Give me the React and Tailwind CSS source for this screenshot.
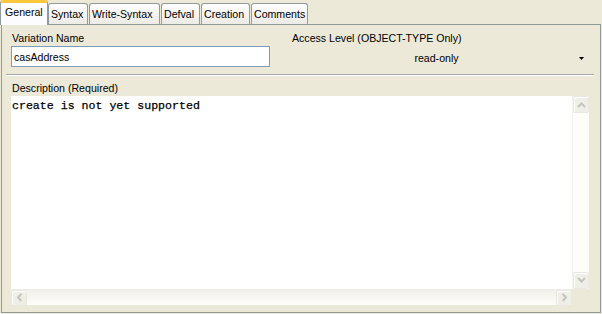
export default function App() {
  const tabs = [
    { t: "Syntax", cls: "w-[40px]" },
    { t: "Write-Syntax", cls: "w-[71px] ml-[1px]" },
    { t: "Defval", cls: "w-[39px] ml-[1px]" },
    { t: "Creation", cls: "w-[49px] ml-[1px]" },
    { t: "Comments", cls: "w-[57px] ml-[1px]" },
  ];
  const Chev = ({ d }) => (
    <svg width="9" height="7" viewBox="0 0 9 7" className="block">
      <path d={d} fill="none" stroke="#C6C5BD" strokeWidth="2" />
    </svg>
  );
  const ChevV = ({ d }) => (
    <svg width="7" height="9" viewBox="0 0 7 9" className="block">
      <path d={d} fill="none" stroke="#C6C5BD" strokeWidth="2" />
    </svg>
  );
  return (
    <div
      className="w-[602px] h-[314px] bg-[#ECE9D8] text-[10.6px] leading-[14px] text-black overflow-hidden"
      style={{ fontFamily: '"Liberation Sans", Arial, sans-serif' }}
    >
      {/* tabs */}
      <div className="flex items-end h-[24px]">
        <div className="relative z-10 w-[48px] bg-[#FCFCFE] border-x border-[#919B9C] rounded-t-[3px] border-t-[3px] border-t-[#FFC83C] flex items-start pt-[2px] pl-[4px] mb-[-1px] h-[25px]">
          General
        </div>
        {tabs.map((x) => (
          <div
            key={x.t}
            className={`${x.cls} h-[21px] border border-b-0 border-[#919B9C] rounded-t-[3px] bg-gradient-to-b from-[#FEFEFE] to-[#ECEBE6] flex items-start pt-[3px] pl-[2px] whitespace-nowrap`}
          >
            {x.t}
          </div>
        ))}
      </div>
      {/* panel */}
      <div className="ml-[1px] w-[600px] h-[289px] border border-[#919B9C] bg-[#ECE9D8] flex flex-col">
        <div className="flex pl-[9px] pt-[6px] h-[45px]">
          <div className="w-[259px] flex flex-col">
            <div className="pl-[1px]">Variation Name</div>
            <div className="mt-[1px] h-[21px] border border-[#7F9DB9] bg-white pl-[2px] flex items-center">
              casAddress
            </div>
          </div>
          <div className="ml-[22px] w-[296px] flex flex-col">
            <div>Access Level (OBJECT-TYPE Only)</div>
            <div className="mt-[6px] flex items-center">
              <div className="flex-1 text-center pl-[2px]">read-only</div>
              <svg width="5" height="3" viewBox="0 0 5 3" className="mr-[4px]">
                <path d="M0 0H5L2.5 3Z" fill="#000" />
              </svg>
            </div>
          </div>
        </div>
        <div className="mx-[4px] mt-[4px] h-[2px] border-t border-[#A7A6AA] border-b border-b-white w-[588px]" />
        <div className="pl-[10px] mt-[5px] h-[15px]">Description (Required)</div>
        <div className="ml-[9px] w-[578px] flex flex-col">
          <div className="flex h-[193px]">
            <div
              className="flex-1 bg-white pl-[1px] pt-[3px] text-[11.6px] leading-[13px] whitespace-pre"
              style={{ fontFamily: '"Liberation Mono", "Courier New", monospace', WebkitTextStroke: "0.25px #000" }}
            >
              create is not yet supported
            </div>
            <div className="w-[17px] bg-[#FDFDFA] border-l border-[#F3F2EC] flex flex-col justify-between items-center">
              <div className="w-[16px] h-[17px] border border-[#E8E7E0] bg-[#EFEEE7] rounded-[2px] flex items-center justify-center shadow-[inset_1px_1px_0_#fff]">
                <Chev d="M1 6L4.5 2.5L8 6" />
              </div>
              <div className="w-[16px] h-[17px] border border-[#E8E7E0] bg-[#EFEEE7] rounded-[2px] flex items-center justify-center shadow-[inset_1px_1px_0_#fff]">
                <Chev d="M1 1L4.5 4.5L8 1" />
              </div>
            </div>
          </div>
          <div className="flex h-[16px]">
            <div className="w-[561px] bg-gradient-to-b from-[#F1F0EA] to-[#FDFDFA] border-t border-[#EEEDE5] flex justify-between items-center">
              <div className="w-[16px] h-[16px] border border-[#E8E7E0] bg-[#EFEEE7] rounded-[2px] flex items-center justify-center shadow-[inset_1px_1px_0_#fff]">
                <ChevV d="M5.5 1L2 4.5L5.5 8" />
              </div>
              <div className="w-[16px] h-[16px] border border-[#E8E7E0] bg-[#EFEEE7] rounded-[2px] flex items-center justify-center shadow-[inset_1px_1px_0_#fff]">
                <ChevV d="M1.5 1L5 4.5L1.5 8" />
              </div>
            </div>
            <div className="flex-1 bg-[#ECE9D8]" />
          </div>
        </div>
      </div>
    </div>
  );
}
